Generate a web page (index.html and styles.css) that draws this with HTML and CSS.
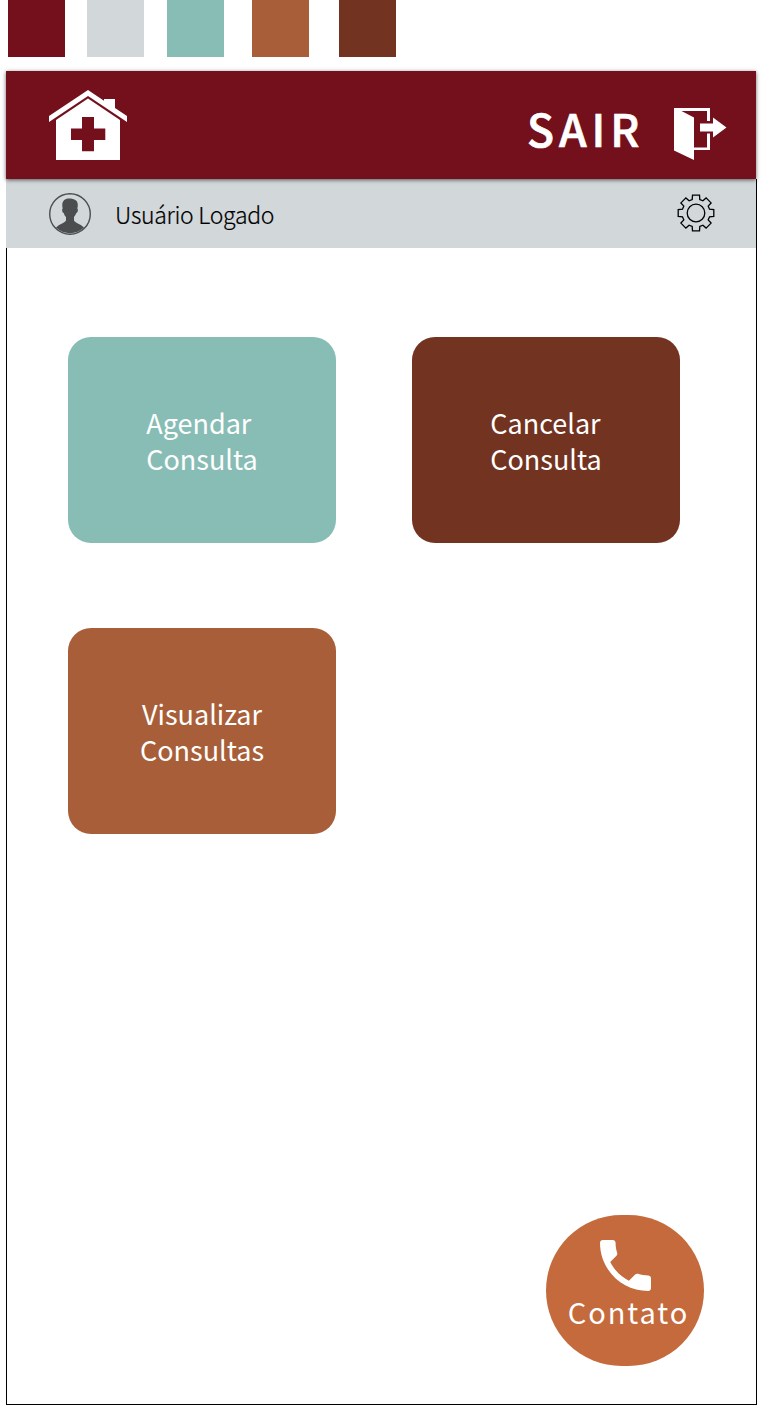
FILE: index.html
```html
<!DOCTYPE html>
<html lang="pt-BR">
<head>
<meta charset="utf-8">
<title>Consultas</title>
<link rel="stylesheet" href="styles.css">
</head>
<body>
<div class="palette">
  <span class="swatch wine"></span>
  <span class="swatch gray"></span>
  <span class="swatch teal"></span>
  <span class="swatch copper"></span>
  <span class="swatch brown"></span>
</div>
<header class="header">
  <svg class="home" viewBox="0 0 78 70" width="78" height="70" fill="#fff">
    <path d="M0 26 39 0 55 10.700V9H66V18L78 26V32L39 6 0 32Z"/>
    <path fill-rule="evenodd" d="M39 8.600 71 30V70H7V30ZM33 27V38.500H22V50H33V61.300H45V50H56.300V38.500H45V27Z"/>
  </svg>
  <a class="logout">
    <span class="logout-text">SAIR</span>
    <svg viewBox="0 0 53 52" width="53" height="52" fill="#fff">
      <path d="M0 0H36V13H33V3H7.500L20 9.500V39.500H33V25.500H36V42H20V52L0 42.500Z"/>
      <path d="M26 15.500H39V9.500L52.500 19.500 39 29.500V23.500H26Z"/>
    </svg>
  </a>
</header>
<main class="screen">
  <div class="userbar">
    <svg viewBox="-21 -21 42 42" width="42" height="42">
      <circle r="20.300" fill="none" stroke="#4b4d4e" stroke-width="1.400"/>
      <path fill="#4b4d4e" d="M-4-15C-1-16 3-15.500 6-13.500 8-12 8.200-8.500 7.300-5.500 8.400-5 7.800-1.500 6.300-1 5.700 1 4.500 2 4 3V6.500C5 9 10 9.500 14 13.500A20 20 0 0 1-14 13.500C-10 9.500-5 9-4 6.500V3C-5 2-5.700 1-6.300-1-7.800-1.500-8.400-5-7.300-5.500-8.200-9.500-8-13.500-4-15Z"/>
    </svg>
    <span class="user">Usuário Logado</span>
    <svg class="gear" viewBox="-19 -19 38 38" width="38" height="38" fill="none" stroke="#000" stroke-width="1.300">
      <circle r="8.800"/>
      <path d="M-3.800-13.500-3.500-17.800H3.500L3.800-13.500 6.900-12.200 10.100-15.100 15.100-10.100 12.200-6.900 13.500-3.800 17.800-3.500V3.500L13.500 3.800 12.200 6.900 15.100 10.100 10.100 15.100 6.900 12.200 3.800 13.500 3.500 17.800H-3.500L-3.800 13.500-6.900 12.200-10.100 15.100-15.100 10.100-12.200 6.900-13.500 3.800-17.800 3.500V-3.500L-13.500-3.800-12.200-6.900-15.100-10.100-10.100-15.100-6.900-12.200Z"/>
    </svg>
  </div>
  <div class="tiles">
    <a class="tile teal"><span>Agendar<br>Consulta</span></a>
    <a class="tile brown"><span>Cancelar<br>Consulta</span></a>
    <a class="tile copper centered"><span>Visualizar<br>Consultas</span></a>
  </div>
  <a class="contact">
    <svg viewBox="3 3 18 18" width="51" height="51" fill="#fff">
      <path d="M6.620 10.790c1.440 2.830 3.760 5.140 6.590 6.590l2.200-2.200c.27-.27.67-.36 1.020-.24 1.120.37 2.330.57 3.570.57.55 0 1 .45 1 1V20c0 .55-.45 1-1 1-9.390 0-17-7.610-17-17 0-.55.45-1 1-1h3.500c.55 0 1 .45 1 1 0 1.250.2 2.450.57 3.570.11.35.03.74-.25 1.020l-2.200 2.200z"/>
    </svg>
    <span class="contact-text">Contato</span>
  </a>
</main>
</body>
</html>
```

FILE: styles.css
```css
* { box-sizing: border-box; }
body {
  margin: 0;
  height: 1405px;
  overflow: hidden;
  background: #fff;
  color: #000;
  font-family: "Noto Sans CJK SC", "Noto Sans", sans-serif;
}
svg { display: block; flex: none; }
.wine { background: #740f1c; }
.gray { background: #d2d7da; }
.teal { background: #88bdb5; }
.copper { background: #a85f39; }
.brown { background: #723420; }
.palette {
  display: grid;
  grid-template-columns: 79px 80px 85px 87px 57px;
  height: 71px;
  padding-left: 8px;
}
.swatch { width: 57px; height: 57px; }
.header {
  position: relative;
  display: flex;
  justify-content: space-between;
  width: 750px;
  height: 108px;
  margin-left: 6px;
  padding: 19px 29px 0 43px;
  background: #740f1c;
  box-shadow: 0 1px 4px rgba(0, 0, 0, .6);
}
.logout { display: flex; padding-top: 18px; color: #fff; }
.logout-text {
  width: 147px;
  margin-top: -3px;
  font-size: 44.500px;
  line-height: 46px;
  font-weight: 500;
  letter-spacing: 4.900px;
  -webkit-text-stroke: .7px #fff;
}
.screen {
  display: flex;
  flex-direction: column;
  width: 751px;
  height: 1226px;
  margin-left: 6px;
  border: solid #000;
  border-width: 0 1px 1px;
}
.userbar {
  display: flex;
  height: 69px;
  margin-left: -1px;
  padding: 14px 41px 0 43px;
  background: #d2d7da;
}
.user {
  margin-left: 24px;
  font-size: 23px;
  line-height: 43px;
  font-weight: 300;
  letter-spacing: -.3px;
  -webkit-text-stroke: .2px #000;
}
.gear { margin: 1px 0 0 auto; }
.tiles {
  display: grid;
  grid-template-columns: 268px 268px;
  grid-auto-rows: 206px;
  gap: 85px 76px;
  margin: 89px 0 0 61px;
}
.tile {
  display: flex;
  align-items: center;
  justify-content: center;
  padding-top: 1px;
  border-radius: 23px;
  color: #fff;
  font-size: 27px;
  line-height: 36px;
}
.centered { text-align: center; }
.contact {
  display: flex;
  flex-direction: column;
  align-items: center;
  width: 158px;
  height: 151px;
  margin: auto 52px 38px auto;
  padding-top: 25px;
  border-radius: 76px;
  background: #c46a3d;
  color: #fff;
}
.contact-text {
  margin: 2px 0 0 7px;
  font-size: 29px;
  line-height: 36px;
  letter-spacing: 1.900px;
}
```
